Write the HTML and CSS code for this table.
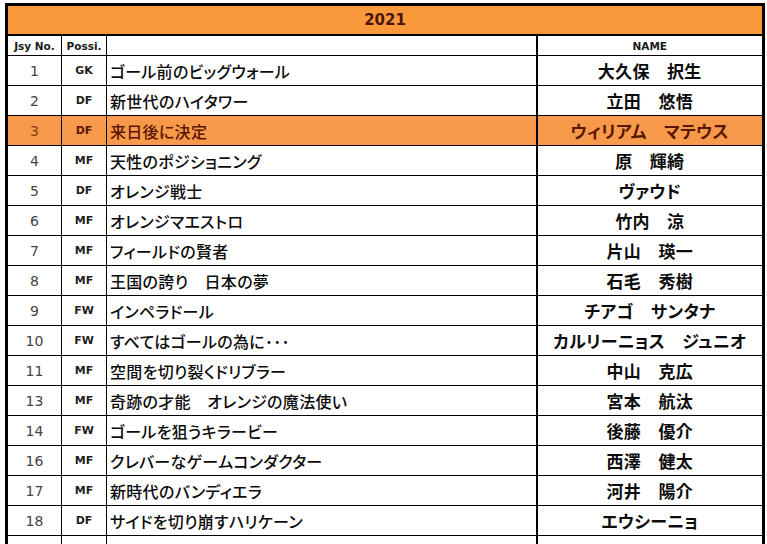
FILE: index.html
```html
<!DOCTYPE html>
<html lang="ja">
<head>
<meta charset="utf-8">
<title>2021</title>
<link rel="stylesheet" href="styles.css">
</head>
<body>
<div class="wrap">
<table class="roster">
  <colgroup>
    <col class="c-no">
    <col class="c-pos">
    <col class="c-nick">
    <col class="c-name">
  </colgroup>
  <thead>
    <tr class="title-row"><th colspan="4">2021</th></tr>
    <tr class="head-row">
      <th>Jsy No.</th>
      <th>Possi.</th>
      <th></th>
      <th class="name-head">NAME</th>
    </tr>
  </thead>
  <tbody>
    <tr><td class="no">1</td><td class="pos">GK</td><td class="nick">ゴール前のビッグウォール</td><td class="name">大久保　択生</td></tr>
    <tr><td class="no">2</td><td class="pos">DF</td><td class="nick">新世代のハイタワー</td><td class="name">立田　悠悟</td></tr>
    <tr class="hl"><td class="no">3</td><td class="pos">DF</td><td class="nick">来日後に決定</td><td class="name">ウィリアム　マテウス</td></tr>
    <tr><td class="no">4</td><td class="pos">MF</td><td class="nick">天性のポジショニング</td><td class="name">原　輝綺</td></tr>
    <tr><td class="no">5</td><td class="pos">DF</td><td class="nick">オレンジ戦士</td><td class="name">ヴァウド</td></tr>
    <tr><td class="no">6</td><td class="pos">MF</td><td class="nick">オレンジマエストロ</td><td class="name">竹内　涼</td></tr>
    <tr><td class="no">7</td><td class="pos">MF</td><td class="nick">フィールドの賢者</td><td class="name">片山　瑛一</td></tr>
    <tr><td class="no">8</td><td class="pos">MF</td><td class="nick">王国の誇り　日本の夢</td><td class="name">石毛　秀樹</td></tr>
    <tr><td class="no">9</td><td class="pos">FW</td><td class="nick">インペラドール</td><td class="name">チアゴ　サンタナ</td></tr>
    <tr><td class="no">10</td><td class="pos">FW</td><td class="nick">すべてはゴールの為に･･･</td><td class="name">カルリーニョス　ジュニオ</td></tr>
    <tr><td class="no">11</td><td class="pos">MF</td><td class="nick">空間を切り裂くドリブラー</td><td class="name">中山　克広</td></tr>
    <tr><td class="no">13</td><td class="pos">MF</td><td class="nick">奇跡の才能　オレンジの魔法使い</td><td class="name">宮本　航汰</td></tr>
    <tr><td class="no">14</td><td class="pos">FW</td><td class="nick">ゴールを狙うキラービー</td><td class="name">後藤　優介</td></tr>
    <tr><td class="no">16</td><td class="pos">MF</td><td class="nick">クレバーなゲームコンダクター</td><td class="name">西澤　健太</td></tr>
    <tr><td class="no">17</td><td class="pos">MF</td><td class="nick">新時代のバンディエラ</td><td class="name">河井　陽介</td></tr>
    <tr><td class="no">18</td><td class="pos">DF</td><td class="nick">サイドを切り崩すハリケーン</td><td class="name">エウシーニョ</td></tr>
    <tr class="empty"><td></td><td></td><td></td><td class="name"></td></tr>
  </tbody>
</table>
</div>
</body>
</html>
```
FILE: styles.css
```css
html, body {
  margin: 0;
  padding: 0;
  background: #ffffff;
}

.wrap {
  padding: 3px 0 0 5px;
}

.roster {
  border-collapse: collapse;
  table-layout: fixed;
  width: 757px;
  border: 3px solid #000;
  font-family: "DejaVu Sans", Verdana, sans-serif;
  color: #111;
}

.c-no { width: 55px; }
.c-pos { width: 45px; }
.c-nick { width: 430px; }
.c-name { width: 227px; }

.roster th,
.roster td {
  border: 1px solid #000;
  padding: 0;
  overflow: hidden;
  white-space: nowrap;
}

.title-row th {
  height: 28px;
  background: #f9993c;
  border-bottom: 2px solid #000;
  font-size: 15px;
  font-weight: bold;
  color: #4a1608;
  text-align: center;
  vertical-align: middle;
}

.head-row th {
  height: 19px;
  font-size: 10.5px;
  font-weight: bold;
  color: #1a1a1a;
  text-align: center;
  vertical-align: middle;
}

.roster tbody td {
  height: 29px;
  vertical-align: middle;
}

.roster td.name,
.roster th.name-head {
  border-left: 2px solid #000;
}

.no {
  text-align: center;
  font-size: 14px;
  color: #444;
}

.pos {
  text-align: center;
  font-size: 11px;
  font-weight: bold;
  color: #1e1e1e;
}

.nick {
  padding-left: 3px !important;
  font-family: "Noto Sans CJK JP", "Noto Sans", sans-serif;
  font-size: 16px;
  font-weight: 500;
  color: #0c0c0c;
  font-feature-settings: "palt";
  letter-spacing: 0.3px;
}

.name {
  text-align: center;
  font-family: "Noto Sans CJK JP", "Noto Sans", sans-serif;
  font-size: 17px;
  font-weight: 700;
  color: #0c0c0c;
  font-feature-settings: "palt";
  letter-spacing: 0.3px;
}

.hl td {
  background: #f7994a;
  color: #5a1600;
}

.hl .no {
  color: #8a3a12;
}
```
